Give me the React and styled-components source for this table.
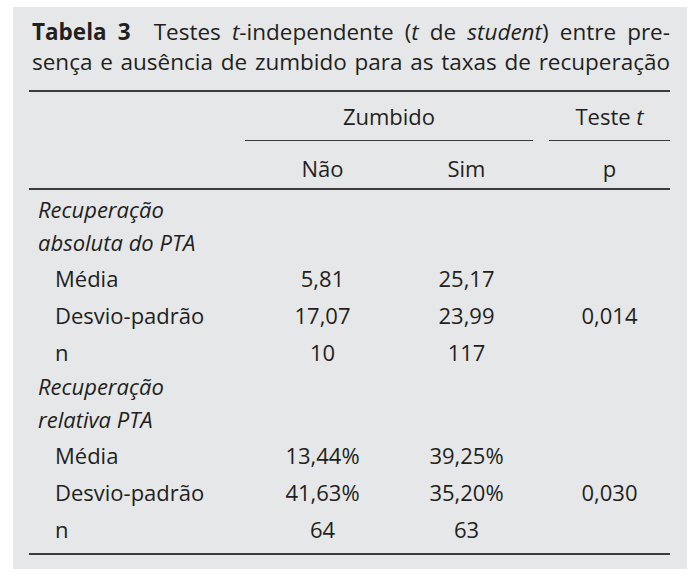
import React from "react";
import styled, { createGlobalStyle } from "styled-components";

const GlobalStyle = createGlobalStyle`
  html, body {
    margin: 0;
    padding: 0;
    background: #ffffff;
  }
  body {
    font-family: "Open Sans", "DejaVu Sans", sans-serif;
    color: #231f20;
  }
`;

const COLUMNS = "216px 155px 133px 16px 121px";

const Page = styled.div`
  padding: 7px 13px 12px 13px;
`;

const Panel = styled.div`
  width: 674px;
  height: 562px;
  box-sizing: border-box;
  background: #e6e7e9;
  padding: 10px 17px 0 16px;
`;

const Caption = styled.div`
  padding: 0 0 13px 3px;
  font-size: 22.5px;
  line-height: 30px;
`;

const CaptionLine = styled.div`
  white-space: nowrap;
  text-align: justify;
  text-align-last: justify;
`;

const Label = styled.b`
  font-weight: 700;
  margin-right: 12px;
`;

const HeadBlock = styled.div`
  border-top: 2px solid #3b3b3d;
  border-bottom: 2px solid #3b3b3d;
`;

const Row = styled.div`
  display: grid;
  grid-template-columns: ${COLUMNS};
  height: ${(p) => p.$h}px;
  padding-top: ${(p) => p.$pt || 0}px;
  box-sizing: border-box;
  font-size: 22px;
  align-items: center;
`;

const Spanner = styled.div`
  grid-column: ${(p) => p.$col};
  align-self: stretch;
  display: flex;
  align-items: center;
  justify-content: center;
  border-bottom: 1.5px solid #3b3b3d;
`;

const Cell = styled.div`
  grid-column: ${(p) => p.$col};
  text-align: center;
`;

const Body = styled.div`
  padding: 3px 0 6px;
  border-bottom: 2px solid #3b3b3d;
`;

const Group = styled.div`
  font-style: italic;
  font-size: 22px;
  line-height: 33px;
  padding-left: 9px;
`;

const ItemLabel = styled.div`
  padding-left: 26px;
`;

const groups = [
  {
    title: ["Recuperação", "absoluta do PTA"],
    rows: [
      ["Média", "5,81", "25,17", ""],
      ["Desvio-padrão", "17,07", "23,99", "0,014"],
      ["n", "10", "117", ""],
    ],
  },
  {
    title: ["Recuperação", "relativa PTA"],
    rows: [
      ["Média", "13,44%", "39,25%", ""],
      ["Desvio-padrão", "41,63%", "35,20%", "0,030"],
      ["n", "64", "63", ""],
    ],
  },
];

const App = () => {
  return (
    <Page>
      <GlobalStyle />
      <Panel>
        <Caption>
          <CaptionLine>
            <Label>Tabela 3</Label> Testes <i>t</i>-independente (<i>t</i> de{" "}
            <i>student</i>) entre pre-
          </CaptionLine>
          <CaptionLine>
            sença e ausência de zumbido para as taxas de recuperação
          </CaptionLine>
        </Caption>

        <HeadBlock>
          <Row $h={49}>
            <Spanner $col="2 / 4">Zumbido</Spanner>
            <Spanner $col="5">
              Teste&nbsp;<i>t</i>
            </Spanner>
          </Row>
          <Row $h={47} $pt={6}>
            <Cell $col="2">Não</Cell>
            <Cell $col="3">Sim</Cell>
            <Cell $col="5">p</Cell>
          </Row>
        </HeadBlock>

        <Body>
          {groups.map((g, gi) => (
            <div key={gi}>
              <Group>
                {g.title.map((t) => (
                  <div key={t}>{t}</div>
                ))}
              </Group>
              {g.rows.map((r, ri) => (
                <Row key={ri} $h={37}>
                  <ItemLabel>{r[0]}</ItemLabel>
                  <Cell $col="2">{r[1]}</Cell>
                  <Cell $col="3">{r[2]}</Cell>
                  <Cell $col="5">{r[3]}</Cell>
                </Row>
              ))}
            </div>
          ))}
        </Body>
      </Panel>
    </Page>
  );
};

export default App;
